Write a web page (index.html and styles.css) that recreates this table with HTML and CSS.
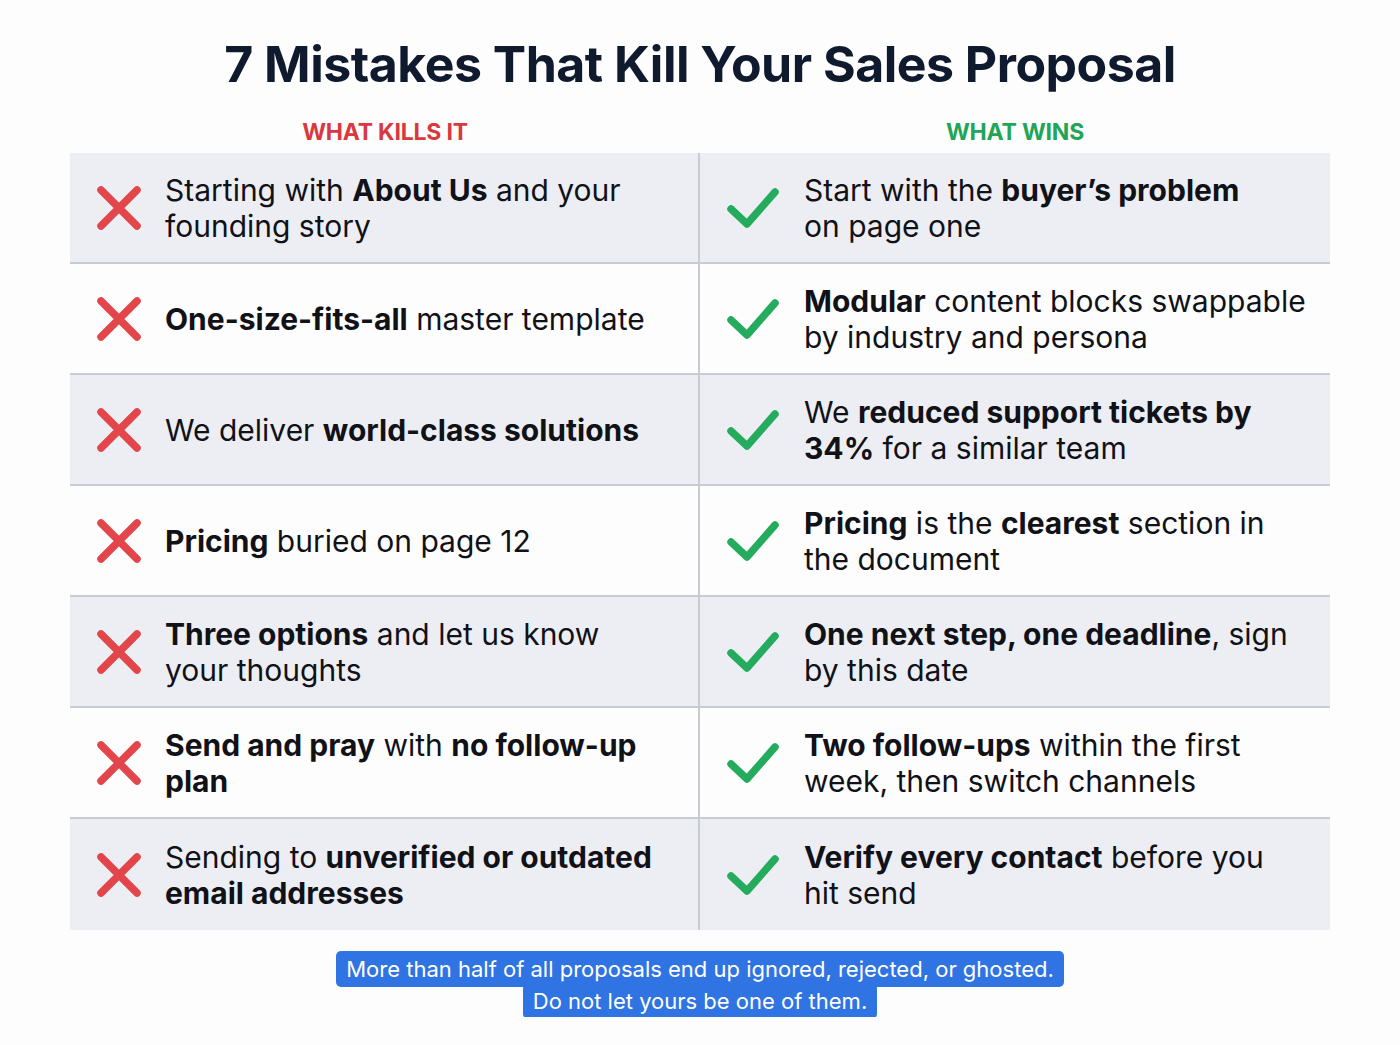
FILE: index.html
```html
<!DOCTYPE html>
<html lang="en">
<head>
<meta charset="utf-8">
<title>7 Mistakes That Kill Your Sales Proposal</title>
<link rel="stylesheet" href="styles.css">
</head>
<body>
<main class="page">
  <h1 class="title">7 Mistakes That Kill Your Sales Proposal</h1>
  <div class="heads">
    <div class="head head-bad">WHAT KILLS IT</div>
    <div class="head head-good">WHAT WINS</div>
  </div>
  <div class="table">
    <div class="row shade">
      <div class="cell bad"><span class="icon"><svg viewBox="0 0 46 46"><path d="M5 5L41 41M41 5L5 41"/></svg></span><p>Starting with <b>About Us</b> and your<br>founding story</p></div>
      <div class="cell good"><span class="icon"><svg viewBox="0 0 54 46"><path d="M5 24L21 39L49 7"/></svg></span><p>Start with the <b>buyer’s problem</b><br>on page one</p></div>
    </div>
    <div class="row">
      <div class="cell bad"><span class="icon"><svg viewBox="0 0 46 46"><path d="M5 5L41 41M41 5L5 41"/></svg></span><p><b>One-size-fits-all</b> master template</p></div>
      <div class="cell good"><span class="icon"><svg viewBox="0 0 54 46"><path d="M5 24L21 39L49 7"/></svg></span><p><b>Modular</b> content blocks swappable<br>by industry and persona</p></div>
    </div>
    <div class="row shade">
      <div class="cell bad"><span class="icon"><svg viewBox="0 0 46 46"><path d="M5 5L41 41M41 5L5 41"/></svg></span><p>We deliver <b>world-class solutions</b></p></div>
      <div class="cell good"><span class="icon"><svg viewBox="0 0 54 46"><path d="M5 24L21 39L49 7"/></svg></span><p>We <b>reduced support tickets by<br>34%</b> for a similar team</p></div>
    </div>
    <div class="row">
      <div class="cell bad"><span class="icon"><svg viewBox="0 0 46 46"><path d="M5 5L41 41M41 5L5 41"/></svg></span><p><b>Pricing</b> buried on page 12</p></div>
      <div class="cell good"><span class="icon"><svg viewBox="0 0 54 46"><path d="M5 24L21 39L49 7"/></svg></span><p><b>Pricing</b> is the <b>clearest</b> section in<br>the document</p></div>
    </div>
    <div class="row shade">
      <div class="cell bad"><span class="icon"><svg viewBox="0 0 46 46"><path d="M5 5L41 41M41 5L5 41"/></svg></span><p><b>Three options</b> and let us know<br>your thoughts</p></div>
      <div class="cell good"><span class="icon"><svg viewBox="0 0 54 46"><path d="M5 24L21 39L49 7"/></svg></span><p><b>One next step, one deadline</b>, sign<br>by this date</p></div>
    </div>
    <div class="row">
      <div class="cell bad"><span class="icon"><svg viewBox="0 0 46 46"><path d="M5 5L41 41M41 5L5 41"/></svg></span><p><b>Send and pray</b> with <b>no follow-up<br>plan</b></p></div>
      <div class="cell good"><span class="icon"><svg viewBox="0 0 54 46"><path d="M5 24L21 39L49 7"/></svg></span><p><b>Two follow-ups</b> within the first<br>week, then switch channels</p></div>
    </div>
    <div class="row shade last">
      <div class="cell bad"><span class="icon"><svg viewBox="0 0 46 46"><path d="M5 5L41 41M41 5L5 41"/></svg></span><p>Sending to <b>unverified or outdated<br>email addresses</b></p></div>
      <div class="cell good"><span class="icon"><svg viewBox="0 0 54 46"><path d="M5 24L21 39L49 7"/></svg></span><p><b>Verify every contact</b> before you<br>hit send</p></div>
    </div>
  </div>
  <p class="caption"><span>More than half of all proposals end up ignored, rejected, or ghosted.<br>Do not let yours be one of them.</span></p>
</main>
</body>
</html>
```

FILE: styles.css
```css
html, body {
  margin: 0;
  padding: 0;
  background: #fdfdfd;
}
body {
  font-family: Inter, "Liberation Sans", sans-serif;
  color: #111118;
}
.page {
  width: 1260px;
  margin: 0 auto;
  padding-top: 34px;
}
.title {
  margin: 0;
  text-align: center;
  font-size: 50px;
  line-height: 60px;
  font-weight: 700;
  color: #0f1a2e;
  letter-spacing: -0.5px;
}
.heads {
  display: grid;
  grid-template-columns: 1fr 1fr;
  margin-top: 24px;
  height: 35px;
}
.head {
  text-align: center;
  font-size: 23px;
  line-height: 28px;
  font-weight: 700;
  letter-spacing: -0.2px;
}
.head-bad { color: #d9383f; }
.head-good { color: #21a557; }
.table {
  display: flex;
  flex-direction: column;
}
.row {
  display: grid;
  grid-template-columns: 630px 630px;
  height: 109px;
  border-bottom: 2px solid #c6cbd4;
  background: #fdfdfd;
}
.row.shade { background: #eceef3; }
.row.last { border-bottom: none; height: 111px; }
.cell {
  display: flex;
  align-items: center;
  padding-left: 26px;
}
.cell.bad {
  border-right: 2px solid #c6cbd4;
  padding-right: 20px;
}
.cell.good {
  padding-right: 10px;
}
.icon {
  flex: none;
  display: flex;
}
.bad .icon svg { width: 46px; height: 46px; }
.good .icon svg { width: 54px; height: 46px; }
.icon svg path {
  fill: none;
  stroke-width: 7.5;
  stroke-linecap: round;
  stroke-linejoin: round;
}
.bad .icon { margin-right: 23px; }
.good .icon { margin-right: 24px; }
.bad .icon path { stroke: #e2454a; }
.good .icon path { stroke: #25ab5d; }
.cell p {
  margin: 0;
  font-size: 30px;
  line-height: 36px;
  font-weight: 400;
  color: #111118;
  white-space: nowrap;
}
.cell b { font-weight: 700; }
.caption {
  margin: 23px 0 0;
  text-align: center;
  font-size: 22px;
  line-height: 32px;
}
.caption span {
  background: #2f74e2;
  color: #ffffff;
  padding: 5px 10px;
  border-radius: 5px;
  -webkit-box-decoration-break: clone;
  box-decoration-break: clone;
}
```
